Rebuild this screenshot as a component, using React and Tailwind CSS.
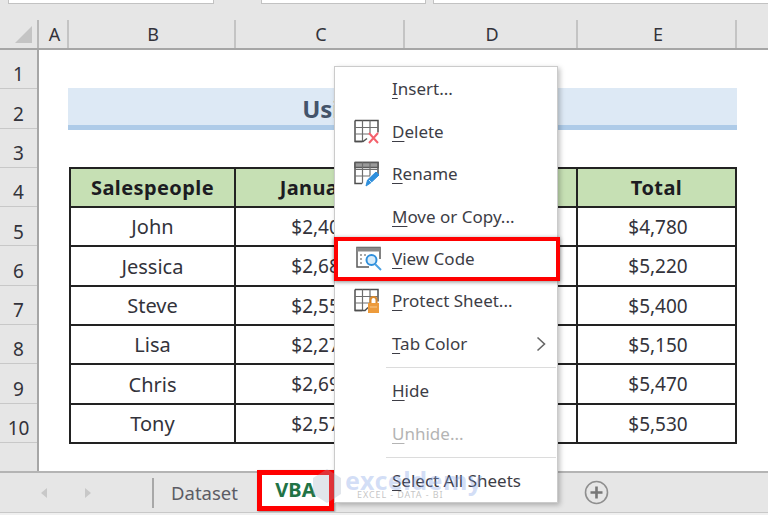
import React from 'react';

const colsClass = 'grid grid-cols-[30px_167px_169px_173px_159px_1fr]';
const font = "font-['Noto_Sans',sans-serif]";
const colStarts = ['col-start-2', 'col-start-3', 'col-start-4', 'col-start-5'];

const rows = [
  ['John', '$2,400', '$2,380', '$4,780'],
  ['Jessica', '$2,680', '$2,540', '$5,220'],
  ['Steve', '$2,550', '$2,850', '$5,400'],
  ['Lisa', '$2,270', '$2,880', '$5,150'],
  ['Chris', '$2,690', '$2,780', '$5,470'],
  ['Tony', '$2,570', '$2,960', '$5,530'],
];

function IconGrid({ children, band }) {
  return (
    <svg width="26" height="26" viewBox="0 0 26 26" fill="none" stroke="#4f4f4f" strokeWidth="1.5">
      <path d="M1 1.5h23v12M1 1.5v21h7" />
      {band && <rect x="1" y="1.5" width="23" height="5" fill="#9a9a9a" stroke="#5a5a5a" />}
      <path d="M1 8.5h23M1 15h15M8.5 1.5v21M16 1.5v13" stroke="#6e6e6e" strokeWidth="1.2" />
      {children}
    </svg>
  );
}

function DeleteIcon() {
  return (
    <IconGrid>
      <path d="M1 22.5h8l4-3" />
      <path d="M15 14l9 10M24 14l-9 10" stroke="#f4616c" strokeWidth="2" />
    </IconGrid>
  );
}

function RenameIcon() {
  return (
    <IconGrid band>
      <path d="M12 25l1.5-6L22 11l3 3-8.5 8z" fill="#2f8fdc" stroke="#2f8fdc" strokeWidth="1" />
      <path d="M15 19l3 3" stroke="#cfe6f8" strokeWidth="1" />
    </IconGrid>
  );
}

function ViewCodeIcon() {
  return (
    <svg width="26" height="26" viewBox="0 0 26 26" fill="none">
      <path d="M13 21H1V1.5h23V13" stroke="#5a5a5a" strokeWidth="1.5" />
      <rect x="1" y="1.5" width="23" height="4" fill="#8a8a8a" />
      <path d="M4 9h2M8 9h2M4 13h2M4 17h2" stroke="#8a8a8a" strokeWidth="1.4" />
      <circle cx="15.5" cy="14" r="5" fill="#d9ecfa" stroke="#2f8fdc" strokeWidth="2" />
      <path d="M19 18l6 6" stroke="#4aa0e2" strokeWidth="2" />
    </svg>
  );
}

function ProtectIcon() {
  return (
    <IconGrid>
      <path d="M1 22.5h10l3-3" />
      <rect x="14" y="15" width="11" height="10" fill="#ed9b3c" stroke="none" />
      <path d="M16.5 15v-3a3 3 0 0 1 6 0v3" stroke="#d9892d" strokeWidth="2" />
      <path d="M16 19h7" stroke="#f8c98e" strokeWidth="1" />
    </IconGrid>
  );
}

function MenuItem({ icon, first, rest, disabled, boxed, arrow }) {
  return (
    <div
      className={`relative flex items-center shrink-0 text-[17px] ${disabled ? 'text-[#b4b4b4]' : 'text-[#3d3d46]'} ${boxed ? 'z-10 h-[44.4px] -my-[1px] -ml-[1px] -mr-[3px] border-4 border-[#ff0000] shadow-[0_1px_4px_rgba(0,0,0,0.45)]' : 'h-[42.4px]'}`}
    >
      <div className={`flex justify-center shrink-0 ${boxed ? 'w-[54px] pl-[8px]' : 'w-[57px] pl-[7px]'}`}>{icon}</div>
      <span>
        <span className="underline underline-offset-[3px] decoration-1">{first}</span>
        {rest}
      </span>
      {arrow && (
        <svg className="ml-auto mr-[11px]" width="10" height="16" viewBox="0 0 10 16" fill="none" stroke="#666" strokeWidth="1.6">
          <path d="M1.5 1.5L8.5 8l-7 6.5" />
        </svg>
      )}
    </div>
  );
}

function Separator() {
  return (
    <div className="h-[5px] flex items-center pl-[51px] pr-[1px]">
      <div className="h-[1px] w-full bg-[#dcdcdc]" />
    </div>
  );
}

export default function App() {
  return (
    <div className={`relative w-[768px] h-[515px] overflow-hidden flex flex-col bg-[#e6e6e6] ${font}`}>
      {/* formula bar remains */}
      <div className="h-[20px] flex items-start gap-[7px] shrink-0">
        <div className="ml-[8px] w-[206px] h-[4px] bg-white border-b border-x border-[#c2c2c2]" />
        <div className="ml-[40px] w-[165px] h-[4px] bg-white border-b border-x border-[#c2c2c2]" />
        <div className="flex-1 h-[4px] bg-white border-b border-l border-[#c2c2c2]" />
      </div>

      {/* column headers */}
      <div className="flex h-[30px] shrink-0 border-b-2 border-[#a6a6a6] text-[18px] text-[#33333b]">
        <div className="w-[39px] flex items-center justify-end pr-[5px] border-r-2 border-[#b8b8b8]">
          <div className="w-0 h-0 border-l-[17px] border-l-transparent border-b-[17px] border-b-[#c4c4c4]" />
        </div>
        <div className={`${colsClass} flex-1 min-w-0`}>
          {['A', 'B', 'C', 'D', 'E'].map((c) => (
            <div key={c} className="flex items-center justify-center pl-[3px] border-r-2 border-[#c4c4c4]">{c}</div>
          ))}
        </div>
      </div>

      {/* sheet */}
      <div className="flex flex-1 min-h-0">
        <div className="w-[39px] shrink-0 border-r-2 border-[#a6a6a6] text-[19px] text-[#33333b]">
          {Array.from({ length: 10 }, (_, i) => (
            <div key={i} className="h-[39.3px] flex items-center justify-center pt-[11px] border-b border-[#c8c8c8]">{i + 1}</div>
          ))}
        </div>
        <div className="flex-1 min-w-0 bg-white">
          <div className={`${colsClass} mt-[1px] grid-rows-[repeat(10,39.3px)] text-[#33333b] text-[20px]`}>
            <div className="col-start-2 col-span-4 row-start-2 -mt-[2px] -ml-[1px] flex items-center justify-center pr-[12px] pt-[5px] bg-[#dde9f5] border-b-[5px] border-[#aecbe8] text-[24px] font-bold text-[#44546a]">
              Using VBA Code
            </div>

            {['Salespeople', 'January', 'February', 'Total'].map((h, i) => (
              <div
                key={h}
                className={`${colStarts[i]} row-start-4 -mt-[2px] flex items-center justify-center bg-[#c6e0b4] border-y-2 border-r-2 border-[#222] font-bold tracking-[0.4px] text-[#1c1c22] ${i === 0 ? 'border-l-2' : ''}`}
              >
                {h}
              </div>
            ))}
            {rows.map((r, ri) =>
              r.map((v, i) => (
                <div
                  key={v + i}
                  className={`${colStarts[i]} flex items-center justify-center pt-[1px] border-b-2 border-r-2 border-[#222] ${i === 0 ? 'border-l-2' : 'pl-[3px] text-[19px]'}`}
                  style={{ gridRowStart: ri + 5 }}
                >
                  {v}
                </div>
              ))
            )}
          </div>
        </div>
      </div>

      {/* sheet tabs */}
      <div className="h-[41px] shrink-0 flex items-center border-t-2 border-[#b4b4b4]">
        <svg className="ml-[40px]" width="8" height="12" viewBox="0 0 8 12"><path d="M7 1L1 6l6 5z" fill="#c8c8c8" /></svg>
        <svg className="ml-[36px]" width="8" height="12" viewBox="0 0 8 12"><path d="M1 1l6 5-6 5z" fill="#c8c8c8" /></svg>
        <div className="ml-[60px] w-[2px] h-[30px] bg-[#a8a8a8]" />
        <span className="ml-[17px] text-[18.5px] text-[#5c5c64]">Dataset</span>
        <div className="ml-[19px] -mt-[5px] w-[77px] h-[41px] bg-white border-[5px] border-[#ff0000] flex items-center justify-center text-[20px] font-bold text-[#217346] shadow-[1px_1px_2px_rgba(0,0,0,0.4)]">
          VBA
        </div>
        <svg className="ml-[250px]" width="25" height="25" viewBox="0 0 25 25" fill="none">
          <circle cx="12.5" cy="12.5" r="11" stroke="#8f8f8f" strokeWidth="1.6" />
          <path d="M12.5 6.5v12M6.5 12.5h12" stroke="#777" strokeWidth="2.6" />
        </svg>
      </div>
      <div className="h-[3px] shrink-0 border-t border-[#c8c8c8] bg-[#f0f0f0]" />

      {/* context menu */}
      <div className="absolute left-[334px] top-[66px] w-[224px] h-[437px] pt-[1px] bg-white border border-[#cbcbcb] shadow-[2px_2px_5px_rgba(0,0,0,0.25)] flex flex-col">
        <MenuItem first="I" rest="nsert..." />
        <MenuItem icon={<DeleteIcon />} first="D" rest="elete" />
        <MenuItem icon={<RenameIcon />} first="R" rest="ename" />
        <MenuItem first="M" rest="ove or Copy..." />
        <MenuItem icon={<ViewCodeIcon />} first="V" rest="iew Code" boxed />
        <MenuItem icon={<ProtectIcon />} first="P" rest="rotect Sheet..." />
        <MenuItem first="T" rest="ab Color" arrow />
        <Separator />
        <MenuItem first="H" rest="ide" />
        <MenuItem first="U" rest="nhide..." disabled />
        <Separator />
        <MenuItem first="S" rest="elect All Sheets" />
      </div>

      {/* watermark */}
      <div className="absolute left-[312px] top-[468px] flex items-start pointer-events-none">
        <svg width="30" height="36" viewBox="0 0 30 36">
          <path d="M15 1l14 9v16l-14 9-14-9V10z" fill="#9aa8bc" fillOpacity="0.3" />
        </svg>
        <div className="ml-[3px] flex flex-col leading-none">
          <span className="text-[25px] font-bold tracking-[0.5px] text-[#7f9fe6]/35">exceldemy</span>
          <span className="-mt-[3px] ml-[12px] text-[9px] tracking-[0.9px] text-[#8a8a8a]/50">EXCEL - DATA - BI</span>
        </div>
      </div>
    </div>
  );
}
